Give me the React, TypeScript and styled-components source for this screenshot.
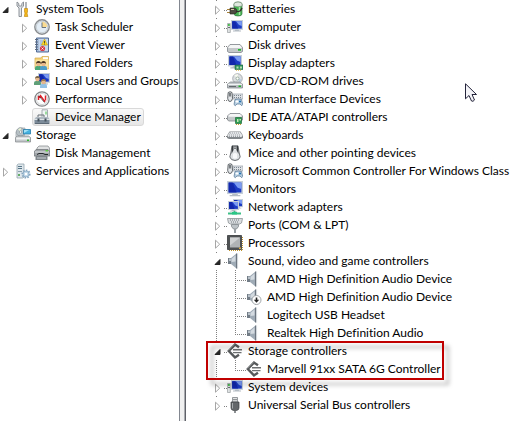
import React from 'react';
import styled, { createGlobalStyle, css } from 'styled-components';

const GlobalStyle = createGlobalStyle`
  *, *::before, *::after { box-sizing: border-box; }
  body {
    margin: 0;
    background: #ffffff;
    color: #000000;
    font: 12px/18px Lato, "Noto Sans", sans-serif;
    font-variant-ligatures: none;
  }
`;

const Console = styled.main`
  position: relative;
  display: grid;
  grid-template-columns: 186px minmax(0, 1fr);
  min-height: 100vh;
`;

const ConsolePane = styled.nav`
  display: flex;
  border-right: 1px solid #5f6168;
  box-shadow: inset -1px 0 #a9abb0, inset -5px 0 #f0f0f0, inset -6px 0 #828790;
`;

const DevicePane = styled.section`
  padding-left: 24px;
`;

const Tree = styled.ul`
  list-style: none;
  margin: 0;
  padding: 0;
`;

const Node = styled.li`
  display: block;
`;

const Row = styled.div<{ $level?: number }>`
  display: flex;
  height: 18px;
  padding-left: ${({ $level = 0 }) => $level * 19}px;
  white-space: nowrap;
`;

const Item = styled.span<{ $selected?: boolean }>`
  display: flex;
  align-items: center;
  gap: 5px;
  height: 18px;
  margin-left: -2px;
  padding: 0 2px 0 1px;
  border: 1px solid transparent;
  border-radius: 3px;
  ${({ $selected }) =>
    $selected &&
    css`
      border-color: #d9d9d9;
      background: linear-gradient(#fafafa, #e6e6e6);
    `}
`;

const Gutter = styled.span`
  display: flex;
  flex: none;
  align-items: flex-end;
  width: 15px;
`;

const dotsDown = 'repeating-linear-gradient(#808080 0 1px, transparent 1px 2px)';
const dotsAcross = 'repeating-linear-gradient(90deg, #808080 0 1px, transparent 1px 2px)';

const Trunk = styled.span`
  display: flex;
  flex: none;
  align-items: flex-end;
  width: 17px;
  background: ${dotsDown} 6px 0 / 1px 100% no-repeat;
`;

const RootBranch = styled(Trunk)<{ $last?: boolean }>`
  background:
    ${dotsAcross} 14px 10px / 3px 1px no-repeat,
    ${dotsDown} 6px 0 / 1px ${({ $last }) => ($last ? '50%' : '100%')} no-repeat;
`;

const Elbow = styled.span<{ $last?: boolean }>`
  flex: none;
  width: 19px;
  background:
    ${dotsAcross} 10px 10px / 9px 1px no-repeat,
    ${dotsDown} 8px 0 / 1px ${({ $last }) => ($last ? '11px' : '100%')} no-repeat;
`;

const Expander = styled.button<{ $inset: number }>`
  display: flex;
  margin: 0 0 0 ${({ $inset }) => $inset}px;
  padding: 3px 1px;
  border: 0;
  background: #ffffff;
`;

const Glyph = styled.svg`
  display: block;
  flex: none;
  width: 16px;
  height: 16px;
`;

const ArrowGlyph = styled.svg`
  display: block;
  width: 7px;
  height: 10px;
`;

const Highlighted = styled(Node)`
  position: relative;
`;

const Callout = styled.span`
  position: absolute;
  top: -1px;
  left: -4px;
  width: 238px;
  height: 39px;
  border: 2px solid #c00000;
  filter: drop-shadow(5px 5px 2px rgba(0, 0, 0, 0.3));
  pointer-events: none;
`;

const Pointer = styled.svg`
  position: absolute;
  top: 83px;
  left: 465px;
  width: 12px;
  height: 20px;
`;

function Monitor({ x = 0, y = 0, w = 12 }: { x?: number; y?: number; w?: number }) {
  return (
    <svg x={x} y={y} width={w} height={w} viewBox="0 0 12 12">
      <path d="M4.500 9h3l.8 1.500H10v1H2v-1h1.700z" fill="#b4bcc4" />
      <rect width="12" height="9.800" fill="#c6cfd8" />
      <rect x="1.200" y="1.200" width="9.600" height="7.400" fill="#1c3cc4" />
      <path d="M5 1.200h5.800V6L8 5z" fill="#7c9cf2" />
      <path d="M1.200 1.200h3l3 7.400h-6z" fill="#1228ac" />
    </svg>
  );
}

function Gamepad() {
  return (
    <g>
      <path d="M6 3h10v5H6z" fill="#dde1e5" stroke="#98a1a9" strokeWidth=".7" />
      <path d="M7 4.500h8M7 6.500h8" stroke="#7d8790" strokeDasharray="1 1" />
      <path d="M1.200 1.500q2-1.500 3.800 0l.5 6q-.5 3-2.500 3T.700 7.500z" fill="#e2e5e8" stroke="#4c5156" strokeWidth=".9" />
      <path d="M3 2v3.500" stroke="#33383c" strokeWidth="1.200" />
      <path d="M8 8.500q3.500-1 6.500 0l1.200 5q-.7 2.500-2.700-.500h-3q-2 3-3 .5z" fill="#b6cde0" stroke="#5e7e9a" strokeWidth=".8" />
      <path d="M8.500 10.500h3M10 9v3" stroke="#fff" />
      <circle cx="13" cy="10.500" r="1.100" fill="#2573b0" />
    </g>
  );
}

function Speaker() {
  return (
    <g>
      <path d="M1 5h4v6H1z" fill="#727c86" />
      <path d="M2 5.500h2.500v2.500H2z" fill="#b9c2ca" />
      <path d="M4 5 9.500.500v15L4 11z" fill="#9fabb6" />
      <path d="M4.500 6 8.500 2.500v6l-4 .5z" fill="#d3dae0" />
      <path d="M9 .500h1.200v15H9z" fill="#6d7680" />
      <path d="M10.600 .500v15" stroke="#cdd3d8" strokeWidth=".8" />
    </g>
  );
}

function Person({ x, y, hair, shirt }: { x: number; y: number; hair: string; shirt: string }) {
  return (
    <g transform={`translate(${x} ${y})`}>
      <path d="M0 9V7q0-2 2-2h3q2 0 2 2v2z" fill={shirt} />
      <circle cx="3.500" cy="3" r="2.300" fill="#e6b78c" />
      <path d="M1 3q0-3 2.500-3T6 3L5 2H2z" fill={hair} />
    </g>
  );
}

const icons: Record<string, React.ReactNode> = {
  tools: (
    <g>
      <path d="M2 1v4l2 2v8.500h2.500V7l2-2V1L6.800 2.500V5H3.800V2.500z" fill="#e3e6e9" stroke="#82888e" strokeWidth=".9" />
      <path d="M11 1v7" stroke="#80868c" strokeWidth="1.200" />
      <path d="M9.500 7.500h3V11l-.5 1 .8 3.500H9.300l.7-3.500-.5-1z" fill="#f4b71c" stroke="#b98208" strokeWidth=".6" />
    </g>
  ),
  clock: (
    <g>
      <circle cx="8" cy="8" r="7.200" fill="#e3edf6" stroke="#8a8d90" strokeWidth="1.400" />
      <path d="M8 8V2.500A5.500 5.500 0 0 1 13.500 8z" fill="#fbdc92" />
      <circle cx="8" cy="8" r="5.700" fill="none" stroke="#c2c8cc" strokeWidth=".8" />
      <path d="M8 3.500V8.500h4" fill="none" stroke="#6a747d" />
    </g>
  ),
  events: (
    <g>
      <path d="M2.500 1h12v14h-12z" fill="#a9bedb" stroke="#526c97" />
      <path d="M5 2h9v12H5z" fill="#c7d8ed" />
      <path d="M6 4h3M6 6h2M6 8h6" stroke="#8fa8ca" strokeWidth=".8" />
      <path d="M1 2.500h3M1 5h3M1 7.500h3M1 10h3M1 12.500h3" stroke="#5c6b7f" />
      <path d="m10.500 2 3 6h-6z" fill="#ffdc20" stroke="#c29c10" strokeWidth=".6" />
      <path d="M10.500 4v2M10.500 6.500v1" stroke="#333" strokeWidth=".8" />
      <circle cx="8.500" cy="11.500" r="2.600" fill="#d83a45" />
      <path d="m7.500 10.500 2 2m0-2-2 2" stroke="#fff" strokeWidth=".8" />
    </g>
  ),
  shared: (
    <g>
      <path d="M1 3h6l1-1.500h6.500V14H1z" fill="#f3d174" stroke="#d2a84c" strokeWidth=".7" />
      <path d="M9 2.200h5v2H9z" fill="#fff" />
      <path d="M1.500 4.800h13v8.700h-13z" fill="#fae3a0" />
      <Person x={1} y={6} hair="#4a3523" shirt="#4ba878" />
      <Person x={6} y={6} hair="#4a3523" shirt="#4d9dc9" />
    </g>
  ),
  users: (
    <g>
      <Monitor x={4} y={0} w={12} />
      <Person x={0} y={3} hair="#7a6649" shirt="#5f9f78" />
      <Person x={6} y={6} hair="#a27c4e" shirt="#93c2e6" />
    </g>
  ),
  performance: (
    <g>
      <circle cx="8" cy="8" r="7.200" fill="#fff" stroke="#808386" strokeWidth="1.300" />
      <circle cx="8" cy="8" r="5.600" fill="none" stroke="#c6cacc" strokeWidth=".8" />
      <path d="M4.500 5v4M6 4l5 7M11.500 4.500v5M6 5v2" fill="none" stroke="#dc2029" strokeWidth="1.500" />
      <path d="m4.500 4.500 6 7" stroke="#3c4044" strokeWidth=".7" />
    </g>
  ),
  toolbox: (
    <g>
      <path d="M8 .800h5.500V9H8z" fill="#f2f5f6" stroke="#909b9f" strokeWidth=".8" />
      <path d="M11.500 2.500h1v3h-1z" fill="#45c447" />
      <path d="M4 9V6h6v3" fill="none" stroke="#687178" />
      <path d="m.5 10 1.500-2h12l1.500 2v1.500H.500z" fill="#b0bac3" />
      <path d="M.5 11h15v4H.500z" fill="#7d8c9a" />
      <path d="M0 10.500h16" stroke="#dde3e7" />
      <path d="M3.500 9.500h2v3h-2zM10.500 9.500h2v3h-2z" fill="#46525d" />
      <path d="M1 14.500h14" stroke="#5c6975" />
    </g>
  ),
  storage: (
    <g>
      <path d="M1 5 4 1h6l-1 9H1z" fill="#d5dade" stroke="#969da4" strokeWidth=".7" />
      <circle cx="5.500" cy="5" r="4.200" fill="#b6c0c5" stroke="#8a9299" strokeWidth=".6" />
      <path d="M5.500 5 3 2l3-1z" fill="#ecf5d5" />
      <circle cx="5.500" cy="5" r="1.200" fill="#fff" stroke="#6b767e" strokeWidth=".5" />
      <path d="M8.500 2.500h7V7h-7z" fill="#46b1df" stroke="#277ca9" strokeWidth=".8" />
      <path d="M9 3h5L9 6z" fill="#a2e1f6" />
      <path d="m.5 10.500 2-1.500h11l2 1.500v4.500H.500z" fill="#c3c7ca" stroke="#7f8488" strokeWidth=".7" />
      <path d="M1.200 10.500h13.600V12.500H1.200z" fill="#f1f3f4" />
      <path d="M12 12.500h2V14h-2z" fill="#30bb30" />
    </g>
  ),
  disks: (
    <g>
      <path d="m3 3 2-2h9l1.500 2v4H3z" fill="#dfe1e2" stroke="#8c9093" strokeWidth=".8" />
      <path d="m0 7 2-2.500h12L16 7v4H0z" fill="#a0a5a9" stroke="#6c7074" strokeWidth=".7" />
      <path d="M1 6.500h14v1H1z" fill="#e0e3e5" />
      <path d="M3 9.500 5 8.500h4l2 1h3" stroke="#25292c" fill="none" />
      <path d="M11.500 5h2.500v1.500h-2.500z" fill="#61cc43" />
      <path d="M1.500 11h12v4h-12z" fill="#7f868b" />
      <path d="M3 12.500h9v1H3z" fill="#ccd1d4" />
    </g>
  ),
  services: (
    <g>
      <path d="m2 2 1.500-1H9v13l-1 1H2z" fill="#dfe7ec" stroke="#92a4af" strokeWidth=".8" />
      <path d="M3 3.500h4M3 5.500h4" stroke="#587789" />
      <path d="M3 8.500h4" stroke="#8ba1ae" />
      <path d="M3 11h2v2H3z" fill="#63ad66" />
      <circle cx="11" cy="11" r="3.700" fill="none" stroke="#8aa9c3" strokeWidth="1.800" strokeDasharray="1.600 1.200" />
      <circle cx="11" cy="11" r="3" fill="#bed6e8" stroke="#7b9db9" strokeWidth=".6" />
      <circle cx="11" cy="11" r="1.300" fill="#fff" />
    </g>
  ),
  battery: (
    <g>
      <path d="M7 3q0-2 4-2t4 2v10q0 2-4 2t-4-2z" fill="#45b552" stroke="#397446" strokeWidth=".7" />
      <path d="M7 3q0-2 4-2t4 2v2q-4 1.500-8 0z" fill="#dfe8de" stroke="#778a78" strokeWidth=".6" />
      <path d="M12.500 6v8" stroke="#a8e2a8" strokeWidth="1.500" />
      <path d="M0 8.500h3M0 11.500h3" stroke="#a88239" strokeWidth="1.200" />
      <path d="M3 7h3q4 0 4 3t-4 3H3z" fill="#4d4c42" stroke="#25251e" strokeWidth=".6" />
      <path d="M4 8.500h3" stroke="#d4caa8" />
      <path d="M9 10q4 2 6-3" fill="none" stroke="#302e29" strokeWidth="1.300" />
    </g>
  ),
  computer: (
    <g>
      <Monitor x={4} y={1} w={12} />
      <path d="M.5 4.500h2.800v9H.500z" fill="#dfe2e3" stroke="#999ea0" strokeWidth=".7" />
      <path d="M1 5h1.800v2H1z" fill="#47bd4b" />
      <path d="M1 8.500h2" stroke="#687074" />
    </g>
  ),
  drive: (
    <g>
      <path d="M.5 10.500 3 7.500h10l2.500 3v4l-1.500 1H2l-1.500-1z" fill="#c4c8ca" stroke="#82878b" strokeWidth=".8" />
      <path d="M1 10.500 3.300 8h9.400l2.300 2.500-1 .5H2z" fill="#f5f6f6" />
      <path d="M11 12h3v1.700h-3z" fill="#20b82c" />
    </g>
  ),
  display: (
    <g>
      <Monitor x={1} y={0} w={14} />
      <path d="M8 10h8v4.500H8z" fill="#2c9560" stroke="#1e6741" strokeWidth=".6" />
      <path d="M9.500 11.500h2v2h-2zM13 11.500h2v2h-2z" fill="#b8ddb0" />
      <path d="M9 15.200h5" stroke="#d7ad3c" strokeDasharray="1 1" />
    </g>
  ),
  dvd: (
    <g>
      <circle cx="10.500" cy="5.500" r="4.800" fill="#dcdfe1" stroke="#9a9fa3" strokeWidth=".8" />
      <path d="M10.500 5.500 7 2l4-1z" fill="#f8fbef" />
      <path d="m10.500 5.500 4.300 1-2 3z" fill="#b9cce1" />
      <circle cx="10.500" cy="5.500" r="1.500" fill="#fff" stroke="#7f9a84" strokeWidth=".7" />
      <path d="m.5 11 3-2h9l3 2v4H.500z" fill="#b9bec2" stroke="#7d8286" strokeWidth=".7" />
      <path d="M1 10.800h14V12H1z" fill="#f1f3f4" />
      <path d="M2 13.500h7" stroke="#62686c" />
      <path d="M11.500 12.500h2.500V14h-2.500z" fill="#21b52b" />
    </g>
  ),
  hid: <Gamepad />,
  ide: (
    <g>
      <path d="M.5 7 3 4.500h10L15.500 7v4L14 12H2L.500 11z" fill="#c4c8ca" stroke="#82878b" strokeWidth=".8" />
      <path d="M1 7 3.300 5h9.400L15 7l-1 .8H2z" fill="#f5f6f6" />
      <path d="M8.500 8.500h6v6h-6z" fill="#2c9d52" stroke="#1e6a38" strokeWidth=".7" />
      <path d="M10 10h1.500v3H10zM12.500 10H14v1.500h-1.500z" fill="#c5e7b9" />
      <path d="M9 15.500h5" stroke="#c99e30" strokeDasharray="1 1" />
    </g>
  ),
  keyboard: (
    <g>
      <path d="m2.500 4.500h11L16 8.500V11l-2 1H2l-2-1V8.500z" fill="#83888c" />
      <path d="M3 5h10l2.500 3.500-1 1.500h-13L.500 8.500z" fill="#e4e7e9" />
      <path d="M3 6h10M2 8h12M2 9.500h12" stroke="#8a9196" strokeDasharray="1 1" strokeWidth=".8" />
    </g>
  ),
  mouse: (
    <g>
      <path d="M5 .800h6l1 6.200 1.200 5q-1.200 3.500-5.200 3.500T2.800 12L4 7z" fill="#dfe2e4" stroke="#5b6064" strokeWidth=".9" />
      <path d="M5 1h1.500v4L4.500 9zM11 1H9.500v4l2 4z" fill="#35393c" />
      <path d="M7 1h2v3H7z" fill="#4b5054" />
      <path d="M8 1.500v2" stroke="#fff" />
      <path d="M6 9q2-2 4 0v4q-2 1.500-4 0z" fill="#f8f9fa" />
    </g>
  ),
  monitor: <Monitor w={16} y={0} />,
  network: (
    <g>
      <Monitor x={6} y={0} w={10} />
      <Monitor x={1} y={2} w={11} />
      <path d="M1 14.500h13M7.500 12v3" stroke="#3cbf86" strokeWidth="1.800" />
      <path d="M5 13h5v2.500H5z" fill="#29c786" />
    </g>
  ),
  port: (
    <g>
      <path d="M.5 1.500h15l-1 4.500-2 1h-9l-2-1z" fill="#dadde0" stroke="#8c9296" strokeWidth=".8" />
      <path d="M3 3h10M4 5h8" stroke="#757c81" strokeDasharray="1 1" />
      <path d="M4.500 7.500h7V9.500l-2 2.500h-3l-2-2.500z" fill="#bdc3c7" stroke="#80868b" strokeWidth=".8" />
      <path d="M8 12v4" stroke="#9aa0a4" strokeWidth="2" />
    </g>
  ),
  cpu: (
    <g>
      <path d="M2 15.500h13M15.500 2v13" stroke="#bd912a" strokeDasharray="1 1" />
      <path d="M.500.500h14v14H.500z" fill="#4e5153" stroke="#36393b" strokeWidth=".8" />
      <path d="M3 2.500h10v10H3z" fill="#b0b3b5" />
      <path d="M3 2.500h10l-10 8z" fill="#d0d2d3" />
      <path d="M12 12.500h2v1.500h-2z" fill="#d9a93a" />
    </g>
  ),
  speaker: <Speaker />,
  speakerDown: (
    <g>
      <Speaker />
      <circle cx="10.500" cy="11" r="4.500" fill="#fff" stroke="#9a9fa3" strokeWidth=".9" />
      <path d="M10.500 8.500V11" stroke="#222" strokeWidth="1.600" />
      <path d="M7.800 10.800h5.400l-2.700 2.900z" fill="#222" />
    </g>
  ),
  controller: (
    <g>
      <path d="M12 4.300 8 1.600 1.800 8 8 14.400l4-2.700" fill="none" stroke="#56595b" strokeWidth="2.400" />
      <path d="M6 6.800h9M6 9.600h8.500" stroke="#6c6f71" strokeWidth="1.400" />
      <path d="M1.500 7.500 7.500 1.300" stroke="#9a9d9f" strokeWidth=".7" />
    </g>
  ),
  usb: (
    <g>
      <path d="M5.500.500h5V5h-5z" fill="#e1e3e4" stroke="#7e8386" strokeWidth=".8" />
      <path d="M7 2v1.200M9 2v1.200" stroke="#44484b" />
      <path d="M4 5h8v6q0 2-2.500 2.500h-3Q4 13 4 11z" fill="#63676a" stroke="#3b3e40" strokeWidth=".7" />
      <path d="M5.500 6v5.500" stroke="#a7abad" />
      <path d="M8 13.500V16" stroke="#696d70" strokeWidth="1.500" />
    </g>
  ),
};

function Icon({ name }: { name: string }) {
  return (
    <Glyph viewBox="0 0 16 16" aria-hidden="true">
      {icons[name]}
    </Glyph>
  );
}

function Toggle({ label, open, inset }: { label: string; open?: boolean; inset: number }) {
  return (
    <Expander type="button" $inset={inset} aria-expanded={!!open} aria-label={label}>
      <ArrowGlyph viewBox="0 0 7 10">
        {open ? (
          <path d="M6 2.500V7.500H1z" fill="#262626" stroke="#262626" />
        ) : (
          <path d="M1.500 1.200v8L5.700 5.200z" fill="#fff" stroke="#a6a6a6" />
        )}
      </ArrowGlyph>
    </Expander>
  );
}

interface Entry {
  label: string;
  icon: string;
  open?: boolean;
  leaf?: boolean;
  selected?: boolean;
  marked?: boolean;
  children?: Entry[];
}

const consoleTree: Entry[] = [
  {
    label: 'System Tools',
    icon: 'tools',
    open: true,
    children: [
      { label: 'Task Scheduler', icon: 'clock' },
      { label: 'Event Viewer', icon: 'events' },
      { label: 'Shared Folders', icon: 'shared' },
      { label: 'Local Users and Groups', icon: 'users' },
      { label: 'Performance', icon: 'performance' },
      { label: 'Device Manager', icon: 'toolbox', leaf: true, selected: true },
    ],
  },
  {
    label: 'Storage',
    icon: 'storage',
    open: true,
    children: [{ label: 'Disk Management', icon: 'disks', leaf: true }],
  },
  { label: 'Services and Applications', icon: 'services' },
];

const devices: Entry[] = [
  { label: 'Batteries', icon: 'battery' },
  { label: 'Computer', icon: 'computer' },
  { label: 'Disk drives', icon: 'drive' },
  { label: 'Display adapters', icon: 'display' },
  { label: 'DVD/CD-ROM drives', icon: 'dvd' },
  { label: 'Human Interface Devices', icon: 'hid' },
  { label: 'IDE ATA/ATAPI controllers', icon: 'ide' },
  { label: 'Keyboards', icon: 'keyboard' },
  { label: 'Mice and other pointing devices', icon: 'mouse' },
  { label: 'Microsoft Common Controller For Windows Class', icon: 'hid' },
  { label: 'Monitors', icon: 'monitor' },
  { label: 'Network adapters', icon: 'network' },
  { label: 'Ports (COM & LPT)', icon: 'port' },
  { label: 'Processors', icon: 'cpu' },
  {
    label: 'Sound, video and game controllers',
    icon: 'speaker',
    open: true,
    children: [
      { label: 'AMD High Definition Audio Device', icon: 'speaker' },
      { label: 'AMD High Definition Audio Device', icon: 'speakerDown' },
      { label: 'Logitech USB Headset', icon: 'speaker' },
      { label: 'Realtek High Definition Audio', icon: 'speaker' },
    ],
  },
  {
    label: 'Storage controllers',
    icon: 'controller',
    open: true,
    marked: true,
    children: [{ label: 'Marvell 91xx SATA 6G Controller', icon: 'controller' }],
  },
  { label: 'System devices', icon: 'computer' },
  { label: 'Universal Serial Bus controllers', icon: 'usb' },
];

function ConsoleNodes({ entries, level = 0 }: { entries: Entry[]; level?: number }) {
  return (
    <Tree>
      {entries.map((entry) => (
        <Node key={entry.label}>
          <Row $level={level}>
            <Gutter>{!entry.leaf && <Toggle label={entry.label} open={entry.open} inset={1} />}</Gutter>
            <Item $selected={entry.selected}>
              <Icon name={entry.icon} />
              {entry.label}
            </Item>
          </Row>
          {entry.children && <ConsoleNodes entries={entry.children} level={level + 1} />}
        </Node>
      ))}
    </Tree>
  );
}

function DeviceNode({ entry, last }: { entry: Entry; last: boolean }) {
  const Holder = entry.marked ? Highlighted : Node;
  return (
    <Holder>
      <Row>
        <RootBranch $last={last}>
          <Toggle label={entry.label} open={entry.open} inset={3} />
        </RootBranch>
        <Item>
          <Icon name={entry.icon} />
          {entry.label}
        </Item>
      </Row>
      {entry.children && (
        <Tree>
          {entry.children.map((child, index) => (
            <Node key={index}>
              <Row>
                <Trunk />
                <Elbow $last={index === entry.children!.length - 1} />
                <Item>
                  <Icon name={child.icon} />
                  {child.label}
                </Item>
              </Row>
            </Node>
          ))}
        </Tree>
      )}
      {entry.marked && <Callout />}
    </Holder>
  );
}

export default function App() {
  return (
    <>
      <GlobalStyle />
      <Console>
        <ConsolePane aria-label="Console tree">
          <ConsoleNodes entries={consoleTree} />
        </ConsolePane>
        <DevicePane aria-label="Devices">
          <Tree>
            {devices.map((entry, index) => (
              <DeviceNode key={entry.label} entry={entry} last={index === devices.length - 1} />
            ))}
          </Tree>
        </DevicePane>
        <Pointer viewBox="0 0 12 20" aria-hidden="true">
          <path d="M.5.800v15l3.500-3.300 2.500 5.500q1.500 1 3-1L7 11.500h4.500z" fill="#f4f4f8" stroke="#23233a" />
        </Pointer>
      </Console>
    </>
  );
}
